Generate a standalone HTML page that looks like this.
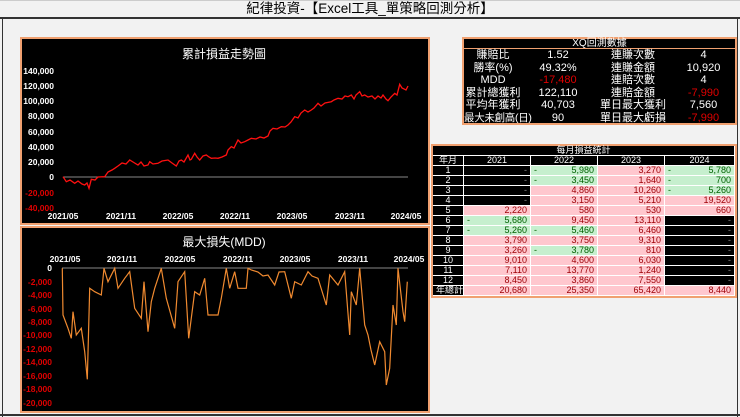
<!DOCTYPE html>
<html><head><meta charset="utf-8"><style>
*{margin:0;padding:0;box-sizing:border-box}
body{width:740px;height:417px;background:#f2f2f2;position:relative;overflow:hidden;font-family:"Liberation Sans","Noto Sans CJK TC",sans-serif}
.abs{position:absolute}
.box{position:absolute;background:#000;border:2px solid #f0a070}
#xq{position:absolute;left:464px;top:39px;width:271px}
#xq .r{display:flex;height:12.6px;line-height:12.6px;white-space:nowrap}
#xq .r div{color:#fff;font-size:11px;text-align:center;overflow:visible}
#mo{position:absolute;left:433px;top:146px;width:302px}
#mo .r{display:flex;height:10px}
#mo .r div{font-size:9px;line-height:9px;height:10px;padding:0 3px;border-right:1px solid #fff;border-bottom:1px solid #fff;text-align:right;white-space:nowrap;position:relative}
#mo .c0{width:31px}#mo .c1,#mo .c2,#mo .c3{width:67px}#mo .c4{width:70px}
#mo div.k{background:#000;color:#fff;text-align:center}
#mo div.b{background:#000;color:#888}
#mo div.p{background:#ffc7ce;color:#9c0006}
#mo div.g{background:#c6efce;color:#006100}
#mo div.g::before{content:"-";position:absolute;left:3px;top:0}
.ax{font-size:8.5px;fill:#fff;font-weight:bold}
.axr{font-size:8.5px;fill:#e00000;font-weight:bold}
</style></head><body>
<div class="abs" style="left:0;top:0;width:740px;height:1px;background:#ccc"></div>
<div class="abs" style="left:0;top:0;width:740px;height:18px;text-align:center;font-size:13.5px;line-height:18px;color:#000">紀律投資-【Excel工具_單策略回測分析】</div>
<div class="abs" style="left:0;top:17px;width:740px;height:2px;background:#333"></div>
<div class="abs" style="left:2px;top:17px;width:1px;height:400px;background:#333"></div>
<div class="abs" style="left:737px;top:17px;width:1px;height:400px;background:#333"></div>
<div class="abs" style="left:0;top:414px;width:740px;height:2px;background:#333"></div>

<div class="box" style="left:20px;top:37px;width:410px;height:188px"></div>
<div class="box" style="left:20px;top:226px;width:410px;height:187px"></div>
<svg class="abs" style="left:0;top:0" width="440" height="417">
<text x="224" y="58" fill="#fff" font-size="12" text-anchor="middle">累計損益走勢圖</text>
<g text-anchor="end">
<text class="ax" x="54" y="74">140,000</text><text class="ax" x="54" y="89">120,000</text><text class="ax" x="54" y="104">100,000</text><text class="ax" x="54" y="119">80,000</text><text class="ax" x="54" y="135">60,000</text><text class="ax" x="54" y="150">40,000</text><text class="ax" x="54" y="165">20,000</text><text class="ax" x="54" y="180">0</text><text class="axr" x="54" y="196">-20,000</text><text class="axr" x="54" y="211">-40,000</text>
</g>
<g text-anchor="middle">
<text class="ax" x="63" y="219">2021/05</text><text class="ax" x="121" y="219">2021/11</text><text class="ax" x="178" y="219">2022/05</text><text class="ax" x="235" y="219">2022/11</text><text class="ax" x="292" y="219">2023/05</text><text class="ax" x="350" y="219">2023/11</text><text class="ax" x="406" y="219">2024/05</text>
</g>
<line x1="63" y1="177" x2="408" y2="177" stroke="#888" stroke-width="1"/>
<polyline fill="none" stroke="#ff1010" stroke-width="1.3" points="63,176.7 66.3,181.7 70,180 74.7,183.3 78,181 82,184 84.7,185 87,183 89,188.3 91.3,179.3 95,180 98,177 104.7,176.7 108,172 112,170 114.7,168.3 118,166 122,163 126,164 129.7,160 133,162 138,165 141,162 144,166 148,165 149.7,161.7 153,164 158,163.3 162,161 168,160 172,163 176.3,166 179,161 181.3,160 184,162 188,155 190,160 191.3,159.3 194.7,153.3 197,157 199.7,160 203,156 206.3,155 209,157 211.3,158.3 215,158 218,158.3 222,157 226.3,155 228,150 231.3,146.7 234,148 238,140 241,143 244.7,141.7 248,140 251.3,138.3 256,139 260,137 264,138 268,136 270,131 273,128.3 277,129 281.3,126.7 285,127 288,125 291,122 294.7,116.7 298,118 301,113 304.7,110 308,112 311.3,110 314,108 318,103.3 321,106 325,103 331.3,101.7 334,100 338,98.3 342,99 345,96 348,96.7 351.3,95 354,99 356,95 359.7,91.7 362,96 364.7,95 368,97 372,96 375,99 378,96 381,98 383,95 386,99 388,100.7 391,97 394.7,93.3 397,95 399.7,84.3 402,88 404.7,89.3 406,90 408,86"/>
<text x="224" y="246" fill="#fff" font-size="12" text-anchor="middle">最大損失(MDD)</text>
<g text-anchor="middle">
<text class="ax" x="65" y="262">2021/05</text><text class="ax" x="122" y="262">2021/11</text><text class="ax" x="180" y="262">2022/05</text><text class="ax" x="238" y="262">2022/11</text><text class="ax" x="295" y="262">2023/05</text><text class="ax" x="353" y="262">2023/11</text><text class="ax" x="409" y="262">2024/05</text>
</g>
<g text-anchor="end">
<text class="ax" x="52" y="271">0</text><text class="axr" x="52" y="285">-2,000</text><text class="axr" x="52" y="298">-4,000</text><text class="axr" x="52" y="312">-6,000</text><text class="axr" x="52" y="325">-8,000</text><text class="axr" x="52" y="338">-10,000</text><text class="axr" x="52" y="352">-12,000</text><text class="axr" x="52" y="365">-14,000</text><text class="axr" x="52" y="379">-16,000</text><text class="axr" x="52" y="392">-18,000</text><text class="axr" x="52" y="406">-20,000</text>
</g>
<line x1="62" y1="268" x2="408" y2="268" stroke="#888" stroke-width="1"/>
<polyline fill="none" stroke="#f08a30" stroke-width="1.2" points="62.3,268.3 63,315 68,328.3 71.3,338.3 73,311.7 76.3,335 81.3,328.3 84.7,351.7 87.3,379.3 89.7,288.3 94.7,291.7 101.3,295 104,268.3 108,281.7 114.7,268.3 118,288.3 124.7,278.3 129.7,271.7 134.7,308.3 141.3,318.3 144,281.7 148,331.7 151.3,301.7 154.7,288.3 161.3,268.3 166.3,298.3 174.7,328.3 178,281.7 184.7,271.7 188.7,338.3 194.7,291.7 199.7,295 204.7,278.3 208,315 218,315 221.3,298.3 226.3,268.3 229.7,288.3 234.7,271.7 238,288.3 246.3,288.3 248,268.3 251.3,270 258,272 263,276 268,275 274.7,285 279,272 284.7,271.7 291.3,298.3 294.7,281.7 301.3,285 308,271.7 312,276 318,278.3 326.3,305 329.7,275 338,285 344.7,271.7 349.7,335 351.3,291.7 356.3,305 359.7,268.3 364.7,325 368,335 371,350 374.7,365 379.7,341.7 384.7,351.7 386.3,385 389.7,368.3 393,305 396.3,325 398,268.3 403,311.7 404.7,321.7 407.3,281.7"/>
</svg>

<div class="box" style="left:462px;top:37px;width:275px;height:88px"></div>
<div id="xq">
<div style="height:10px;line-height:10px;font-size:10px;color:#fff;text-align:center;border-bottom:1px solid #f0a070">XQ回測數據</div>
<div class="r"><div style="width:58px">賺賠比</div><div style="width:72px">1.52</div><div style="width:78px">連賺次數</div><div style="width:63px">4</div></div>
<div class="r"><div style="width:58px">勝率(%)</div><div style="width:72px">49.32%</div><div style="width:78px">連賺金額</div><div style="width:63px">10,920</div></div>
<div class="r"><div style="width:58px">MDD</div><div style="width:72px;color:#e00000">-17,480</div><div style="width:78px">連賠次數</div><div style="width:63px">4</div></div>
<div class="r"><div style="width:58px">累計總獲利</div><div style="width:72px">122,110</div><div style="width:78px">連賠金額</div><div style="width:63px;color:#e00000">-7,990</div></div>
<div class="r"><div style="width:58px">平均年獲利</div><div style="width:72px">40,703</div><div style="width:78px">單日最大獲利</div><div style="width:63px">7,560</div></div>
<div class="r"><div style="width:58px;font-size:10.5px;letter-spacing:-0.3px">最大未創高(日)</div><div style="width:72px">90</div><div style="width:78px">單日最大虧損</div><div style="width:63px;color:#e00000">-7,990</div></div>
</div>

<div class="box" style="left:431px;top:144px;width:306px;height:154px"></div>
<div id="mo">
<div class="r"><div class="k" style="width:302px">每月損益統計</div></div>
<div class="r"><div class="k c0">年月</div><div class="k c1">2021</div><div class="k c2">2022</div><div class="k c3">2023</div><div class="k c4">2024</div></div>
<div class="r"><div class="k c0">1</div><div class="b c1">-</div><div class="g c2">5,980</div><div class="p c3">3,270</div><div class="g c4">5,780</div></div>
<div class="r"><div class="k c0">2</div><div class="b c1">-</div><div class="g c2">3,450</div><div class="p c3">1,640</div><div class="g c4">700</div></div>
<div class="r"><div class="k c0">3</div><div class="b c1">-</div><div class="p c2">4,860</div><div class="p c3">10,260</div><div class="g c4">5,260</div></div>
<div class="r"><div class="k c0">4</div><div class="b c1">-</div><div class="p c2">3,150</div><div class="p c3">5,210</div><div class="p c4">19,520</div></div>
<div class="r"><div class="k c0">5</div><div class="p c1">2,220</div><div class="p c2">580</div><div class="p c3">530</div><div class="p c4">660</div></div>
<div class="r"><div class="k c0">6</div><div class="g c1">5,680</div><div class="p c2">9,450</div><div class="p c3">13,110</div><div class="b c4">-</div></div>
<div class="r"><div class="k c0">7</div><div class="g c1">5,260</div><div class="g c2">5,460</div><div class="p c3">6,460</div><div class="b c4">-</div></div>
<div class="r"><div class="k c0">8</div><div class="p c1">3,790</div><div class="p c2">3,750</div><div class="p c3">9,310</div><div class="b c4">-</div></div>
<div class="r"><div class="k c0">9</div><div class="p c1">3,260</div><div class="g c2">3,780</div><div class="p c3">810</div><div class="b c4">-</div></div>
<div class="r"><div class="k c0">10</div><div class="p c1">9,010</div><div class="p c2">4,600</div><div class="p c3">6,030</div><div class="b c4">-</div></div>
<div class="r"><div class="k c0">11</div><div class="p c1">7,110</div><div class="p c2">13,770</div><div class="p c3">1,240</div><div class="b c4">-</div></div>
<div class="r"><div class="k c0">12</div><div class="p c1">8,450</div><div class="p c2">3,860</div><div class="p c3">7,550</div><div class="b c4">-</div></div>
<div class="r"><div class="k c0" style="font-size:9px">年總計</div><div class="p c1">20,680</div><div class="p c2">25,350</div><div class="p c3">65,420</div><div class="p c4">8,440</div></div>
</div>
</body></html>
